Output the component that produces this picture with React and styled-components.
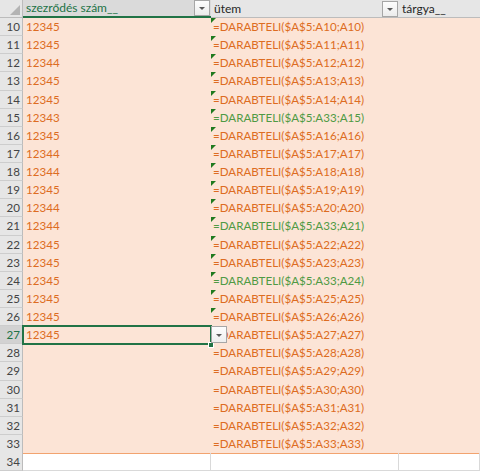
import React from 'react';
import styled, { createGlobalStyle, css } from 'styled-components';

const Global = createGlobalStyle`
  *, *::before, *::after { box-sizing: border-box; }
  html, body { margin: 0; padding: 0; background: #fff; overflow: hidden; }
  body { font-family: Lato, "Liberation Sans", sans-serif; }
`;

const COLS = '23px 188px 188px 1fr';
const GREEN = '#217346';
const SALMON = '#fce4d6';

const Sheet = styled.div`
  width: 480px;
  height: 473px;
  overflow: hidden;
  display: flex;
  flex-direction: column;
  font-family: Lato, "Liberation Sans", sans-serif;
  font-size: 11.6px;
`;

const HeaderRow = styled.div`
  display: grid;
  grid-template-columns: ${COLS};
  height: 18px;
  flex: none;
  background: #e6e6e6;
  font-size: 12px;
`;

const Corner = styled.div`
  border-right: 1px solid #bcbcbc;
  border-bottom: 1px solid #bcbcbc;
  display: flex;
  align-items: flex-end;
  justify-content: flex-end;
  padding: 0 2px 2px 0;
  &::after {
    content: '';
    border-left: 10px solid transparent;
    border-bottom: 10px solid #b4b4b4;
  }
`;

const ColHeader = styled.div`
  display: flex;
  align-items: center;
  justify-content: space-between;
  padding: 0 1px 0 3px;
  line-height: 16px;
  color: #262626;
  border-bottom: 1px solid #bcbcbc;
  ${(p) =>
    p.$active &&
    css`
      color: ${GREEN};
      background: #dadada;
      border-bottom: 2px solid ${GREEN};
    `}
`;

const FilterButton = styled.span`
  width: 16px;
  height: 16px;
  flex: none;
  border: 1px solid #a6a6a6;
  background: linear-gradient(#fdfdfd, #ececec);
  display: flex;
  align-items: center;
  justify-content: center;
  &::after {
    content: '';
    border-left: 3px solid transparent;
    border-right: 3px solid transparent;
    border-top: 3px solid #5a5a5a;
    margin-top: 1px;
  }
`;

const Body = styled.div`
  display: flex;
  flex-direction: column;
`;

const Row = styled.div`
  display: grid;
  grid-template-columns: ${COLS};
  height: 18.13px;
  flex: none;
  background: ${(p) => (p.$blank ? '#fff' : SALMON)};
`;

const RowHeader = styled.div`
  background: ${(p) => (p.$active ? '#d2d2d2' : '#e6e6e6')};
  color: ${(p) => (p.$active ? GREEN : '#444')};
  border-right: 1px solid #bcbcbc;
  border-bottom: 1px solid #cdcdcd;
  text-align: right;
  padding-right: 2px;
  line-height: 17px;
  overflow: hidden;
`;

const Cell = styled.div`
  position: relative;
  padding-left: ${(p) => (p.$formula ? '2px' : '3px')};
  line-height: 18px;
  white-space: nowrap;
  color: ${(p) => (p.$tone === 'green' ? '#4f9a44' : '#dd6c22')};
  ${(p) =>
    p.$last &&
    css`
      border-bottom: 1px solid #f2a36f;
    `}
  ${(p) =>
    p.$blank &&
    css`
      border-right: 1px solid #d9d9d9;
      border-bottom: 1px solid #d9d9d9;
    `}
  ${(p) =>
    p.$selected &&
    css`
      z-index: 2;
    `}
`;

const ErrorMark = styled.span`
  position: absolute;
  left: 0;
  top: 0;
  border-top: 5px solid #1f7a1f;
  border-right: 5px solid transparent;
`;

const SelectionFrame = styled.span`
  position: absolute;
  left: -1px;
  top: -1px;
  right: -1px;
  bottom: -1px;
  border: 2px solid ${GREEN};
  pointer-events: none;
`;

const FillHandle = styled.span`
  position: absolute;
  right: -3px;
  bottom: -4px;
  width: 6px;
  height: 6px;
  background: ${GREEN};
  border: 1px solid #fff;
`;

const CellDropdown = styled(FilterButton)`
  position: absolute;
  left: 100%;
  top: 0;
  height: 17px;
  background: linear-gradient(#fdfdfd, #eeeeee);
`;

const valuesA = {
  10: '12345', 11: '12345', 12: '12344', 13: '12345', 14: '12345', 15: '12343',
  16: '12345', 17: '12344', 18: '12344', 19: '12345', 20: '12344', 21: '12344',
  22: '12345', 23: '12345', 24: '12345', 25: '12345', 26: '12345', 27: '12345',
};
const inconsistent = new Set([15, 21, 24]);
const SELECTED = 27;

export default function App() {
  const rows = [];
  for (let n = 10; n <= 33; n++) rows.push(n);

  return (
    <Sheet>
      <Global />
      <HeaderRow>
        <Corner />
        <ColHeader $active>
          <span>szezrődés szám__</span>
          <FilterButton />
        </ColHeader>
        <ColHeader>
          <span>ütem</span>
          <FilterButton />
        </ColHeader>
        <ColHeader>
          <span>tárgya__</span>
        </ColHeader>
      </HeaderRow>
      <Body>
        {rows.map((n) => {
          const green = inconsistent.has(n);
          const formula = `=DARABTELI($A$5:A${green ? 33 : n};A${n})`;
          const last = n === 33;
          const sel = n === SELECTED;
          return (
            <Row key={n}>
              <RowHeader $active={sel}>{n}</RowHeader>
              <Cell $last={last} $selected={sel}>
                {valuesA[n] || ''}
                {sel && (
                  <>
                    <SelectionFrame />
                    <FillHandle />
                    <CellDropdown />
                  </>
                )}
              </Cell>
              <Cell $last={last} $formula $tone={green ? 'green' : 'orange'}>
                {n <= 27 && <ErrorMark />}
                {formula}
              </Cell>
              <Cell $last={last} />
            </Row>
          );
        })}
        <Row $blank>
          <RowHeader>34</RowHeader>
          <Cell $blank />
          <Cell $blank />
          <Cell $blank />
        </Row>
      </Body>
    </Sheet>
  );
}
